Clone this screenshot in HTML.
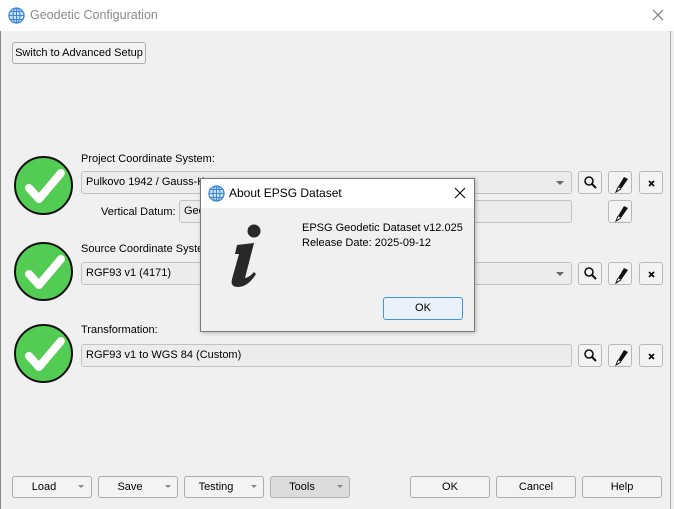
<!DOCTYPE html>
<html><head><meta charset="utf-8"><style>
*{box-sizing:border-box;margin:0;padding:0}
body{width:674px;height:509px;overflow:hidden;background:#f0f0f0;font-family:"Liberation Sans",sans-serif;font-size:11px;color:#000;position:relative}
.a{position:absolute;white-space:nowrap}
.btn{position:absolute;background:#f3f3f3;border:1px solid #adadad;border-radius:3px;text-align:center;line-height:20px;font-size:11px;white-space:nowrap}
.field{position:absolute;background:#ececec;border:1px solid #c2c2c2;border-radius:3px;padding-left:4px;line-height:20px;overflow:hidden;white-space:nowrap}
.dd{position:absolute;width:0;height:0;border-left:4px solid transparent;border-right:4px solid transparent;border-top:4px solid #666}
.ib{position:absolute;width:24px;height:23px;background:#f3f3f3;border:1px solid #b8b8b8;border-radius:3px}
.chk{position:absolute;width:59px;height:59px;border-radius:50%;background:#52cc52;border:2px solid #111}
</style></head><body>
<div class="a" style="left:0;top:0;width:674px;height:31px;background:#fff"></div>
<svg class="a" style="left:8px;top:7px" width="17" height="17" viewBox="0 0 17 17"><circle cx="8.5" cy="8.5" r="7.5" fill="#cfe3f7" stroke="#3b86d6" stroke-width="1.3"/><ellipse cx="8.5" cy="8.5" rx="3.5" ry="7.5" fill="none" stroke="#3b86d6" stroke-width="1.1"/><path d="M1 8.5h15M2.5 4.5h12M2.5 12.5h12M8.5 1v15" stroke="#3b86d6" stroke-width="1.1"/></svg>
<div class="a" style="left:30px;top:8px;font-size:12.5px;color:#8a8a8a">Geodetic Configuration</div>
<svg class="a" style="left:652px;top:9px" width="12" height="12"><path d="M1 1l10 10M11 1L1 11" stroke="#777" stroke-width="1.2"/></svg>
<div class="a" style="left:0;top:31px;width:1px;height:478px;background:#888"></div>
<div class="a" style="left:670px;top:31px;width:1px;height:478px;background:#aaa"></div>

<div class="btn" style="left:12px;top:42px;width:134px;height:22px;line-height:20px">Switch to Advanced Setup</div>

<svg width="0" height="0" style="position:absolute"><defs><path id="ck" d="M13 30 L23 41 L45 15" fill="none" stroke="#fff" stroke-width="8" stroke-linecap="round" stroke-linejoin="round"/></defs></svg>
<div class="chk" style="left:14px;top:156px"><svg width="55" height="55"><use href="#ck"/></svg></div>
<div class="chk" style="left:14px;top:242px"><svg width="55" height="55"><use href="#ck"/></svg></div>
<div class="chk" style="left:14px;top:324px"><svg width="55" height="55"><use href="#ck"/></svg></div>

<div class="a" style="left:81px;top:153px">Project Coordinate System:</div>
<div class="field" style="left:81px;top:171px;width:491px;height:23px">Pulkovo 1942 / Gauss-Kruger</div>
<div class="dd" style="left:556px;top:181px"></div>
<div class="a" style="left:101px;top:206px">Vertical Datum:</div>
<div class="field" style="left:179px;top:200px;width:393px;height:23px">Geoid</div>

<div class="a" style="left:81px;top:243px">Source Coordinate System:</div>
<div class="field" style="left:81px;top:262px;width:491px;height:23px">RGF93 v1 (4171)</div>
<div class="dd" style="left:556px;top:272px"></div>

<div class="a" style="left:81px;top:324px">Transformation:</div>
<div class="field" style="left:81px;top:344px;width:491px;height:23px">RGF93 v1 to WGS 84 (Custom)</div>

<svg width="0" height="0" style="position:absolute"><defs>
<g id="sr"><circle cx="10" cy="9" r="4" fill="none" stroke="#111" stroke-width="1.6"/><path d="M13 12l4 4" stroke="#111" stroke-width="2"/></g>
<g id="pn"><path d="M9 15 L15 5 L19 7 L12 17 Z" fill="#111"/><path d="M9 15 L7 20 L12 17" fill="none" stroke="#111" stroke-width="1"/></g>
<g id="xx"><path d="M9 9l5 5M14 9l-5 5" stroke="#111" stroke-width="1.8"/></g>
</defs></svg>
<div class="ib" style="left:578px;top:171px"><svg width="24" height="23"><use href="#sr"/></svg></div>
<div class="ib" style="left:608px;top:171px"><svg width="24" height="23"><use href="#pn"/></svg></div>
<div class="ib" style="left:639px;top:171px"><svg width="24" height="23"><use href="#xx"/></svg></div>
<div class="ib" style="left:608px;top:200px"><svg width="24" height="23"><use href="#pn"/></svg></div>
<div class="ib" style="left:578px;top:262px"><svg width="24" height="23"><use href="#sr"/></svg></div>
<div class="ib" style="left:608px;top:262px"><svg width="24" height="23"><use href="#pn"/></svg></div>
<div class="ib" style="left:639px;top:262px"><svg width="24" height="23"><use href="#xx"/></svg></div>
<div class="ib" style="left:578px;top:344px"><svg width="24" height="23"><use href="#sr"/></svg></div>
<div class="ib" style="left:608px;top:344px"><svg width="24" height="23"><use href="#pn"/></svg></div>
<div class="ib" style="left:639px;top:344px"><svg width="24" height="23"><use href="#xx"/></svg></div>

<div class="btn" style="left:12px;top:476px;width:80px;height:22px;padding-right:16px">Load</div><div class="dd" style="left:78px;top:485px;border-top-color:#888;border-left-width:3px;border-right-width:3px;border-top-width:3px"></div>
<div class="btn" style="left:98px;top:476px;width:80px;height:22px;padding-right:16px">Save</div><div class="dd" style="left:165px;top:485px;border-top-color:#888;border-left-width:3px;border-right-width:3px;border-top-width:3px"></div>
<div class="btn" style="left:184px;top:476px;width:80px;height:22px;padding-right:16px">Testing</div><div class="dd" style="left:251px;top:485px;border-top-color:#888;border-left-width:3px;border-right-width:3px;border-top-width:3px"></div>
<div class="btn" style="left:270px;top:476px;width:80px;height:22px;padding-right:16px;background:#dcdcdc;border-color:#b0b0b0">Tools</div><div class="dd" style="left:337px;top:485px;border-top-color:#888;border-left-width:3px;border-right-width:3px;border-top-width:3px"></div>
<div class="btn" style="left:410px;top:476px;width:80px;height:22px">OK</div>
<div class="btn" style="left:496px;top:476px;width:80px;height:22px">Cancel</div>
<div class="btn" style="left:582px;top:476px;width:80px;height:22px">Help</div>

<!-- dialog -->
<div class="a" style="left:200px;top:178px;width:275px;height:154px;background:#f0f0f0;border:1px solid #7a7a7a;box-shadow:1px 1px 4px rgba(0,0,0,.25)">
 <div class="a" style="left:0;top:0;width:273px;height:29px;background:#fff"></div>
 <svg class="a" style="left:7px;top:6px" width="17" height="17" viewBox="0 0 17 17"><circle cx="8.5" cy="8.5" r="7.5" fill="#cfe3f7" stroke="#3b86d6" stroke-width="1.3"/><ellipse cx="8.5" cy="8.5" rx="3.5" ry="7.5" fill="none" stroke="#3b86d6" stroke-width="1.1"/><path d="M1 8.5h15M2.5 4.5h12M2.5 12.5h12M8.5 1v15" stroke="#3b86d6" stroke-width="1.1"/></svg>
 <div class="a" style="left:28px;top:7px;font-size:12px">About EPSG Dataset</div>
 <svg class="a" style="left:253px;top:8px" width="12" height="12"><path d="M1 1l10 10M11 1L1 11" stroke="#111" stroke-width="1.2"/></svg>
 <svg class="a" style="left:28px;top:44px" width="36" height="66" viewBox="0 0 36 66"><circle cx="25" cy="8" r="6.5" fill="#282828"/><path d="M8 22 L25 20 L16 55 Q21 54 25 49 L27 51 Q19 64 9 64 Q1 64 3 56 L10 31 L6 31 Z" fill="#282828"/></svg>
 <div class="a" style="left:101px;top:42px;line-height:15px">EPSG Geodetic Dataset v12.025<br>Release Date: 2025-09-12</div>
 <div class="btn" style="left:182px;top:118px;width:80px;height:23px;border-color:#3c96e0;background:#e9f1fa">OK</div>
</div>
</body></html>
